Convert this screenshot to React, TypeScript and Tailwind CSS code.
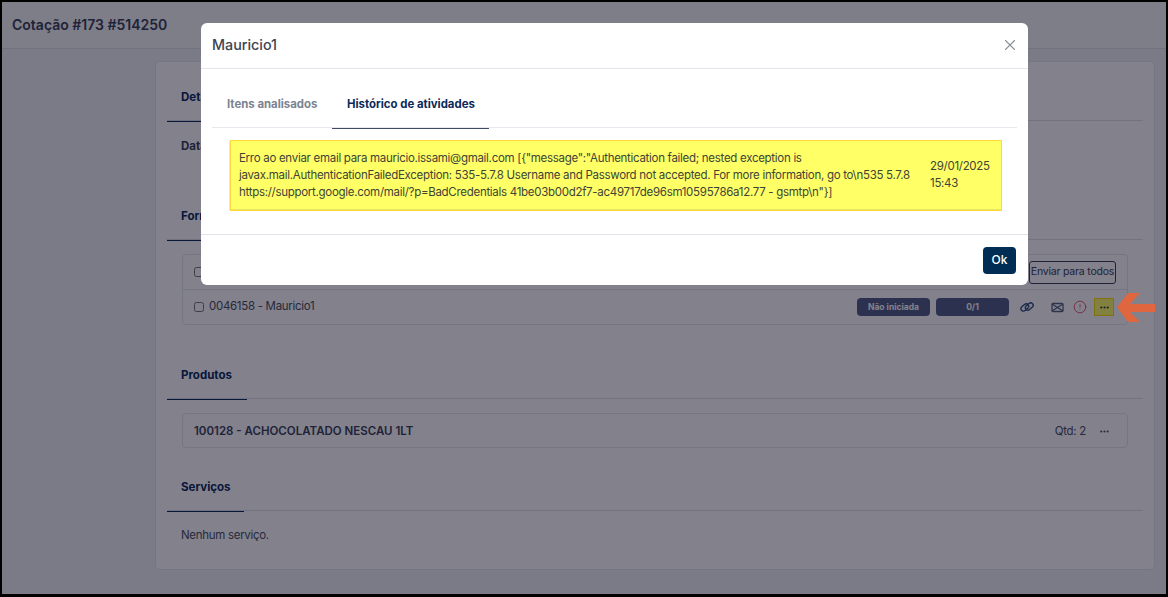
import { AlertCircle, Ellipsis, X } from 'lucide-react';

function SectionTab({ label, width }: { label: string; width: string }) {
  return (
    <div className="flex h-[47px] border-b-[1.5px] border-[#dfe3e8]">
      <div className={`${width} -mb-[1.5px] border-b-[1.5px] border-[#0a2a5a] pl-[14px] pt-[14px] text-[11.5px] leading-[18px] font-bold text-[#0a2a5a]`}>
        {label}
      </div>
    </div>
  );
}

function LinkIcon() {
  return (
    <svg className="ml-[11px] text-[#33507f]" width="14" height="14" viewBox="0 0 14 14" fill="none" stroke="currentColor" strokeWidth="1.4">
      <rect x="0.5" y="5" width="8.5" height="5" rx="2.5" transform="rotate(-40 4.75 7.5)" />
      <rect x="5" y="4" width="8.5" height="5" rx="2.5" transform="rotate(-40 9.25 6.5)" />
    </svg>
  );
}

function MailIcon() {
  return (
    <svg className="ml-[17px] text-[#55657c]" width="13" height="13" viewBox="0 0 13 13" fill="none" stroke="currentColor" strokeWidth="1.3">
      <rect x="1" y="2.5" width="11" height="8" rx="1" />
      <path d="M1 3l5.5 3.5L12 3M1 10l5.5-3.5L12 10" />
    </svg>
  );
}

function Modal() {
  return (
    <div className="absolute left-[199px] top-[21px] w-[827px] h-[262px] rounded-[6px] bg-white flex flex-col">
      {/* Header */}
      <div className="h-[46px] flex items-center justify-between pl-[11px] pr-[9px] pb-[2px] border-b border-[#e3e6ea] shrink-0">
        <span className="text-[14.3px] font-medium text-[#3d4450]">Mauricio1</span>
        <X className="w-[18px] h-[18px] text-[#8a8f98]" strokeWidth={1.5} />
      </div>

      {/* Tabs */}
      <div className="mx-[11px] flex h-[59px] border-b-[1.5px] border-[#e6e9ed] shrink-0">
        <div className="w-[120px] pl-[15px] pt-[26px] text-[11.4px] leading-[18px] font-bold text-[#7b8491]">Itens analisados</div>
        <div className="w-[157px] -mb-[1.5px] border-b-[1.5px] border-[#3f4c63] pl-[15px] pt-[26px] text-[11.4px] leading-[18px] font-bold text-[#0a2a5a]">
          Histórico de atividades
        </div>
      </div>

      {/* Highlighted log entry */}
      <div className="mt-[12px] ml-[29px] w-[772px] h-[71px] border-[1.5px] border-[#ffd83d] bg-[#ffff66] shadow-[-2px_0_0_-1px_#e4e6ea] shrink-0">
        <div className="h-full border-b border-[#e8e85c] flex items-center pl-[8px] text-[11.5px] leading-[17px] tracking-[-0.29px] text-[#3e4436]">
          <div className="w-[691px] shrink-0 whitespace-nowrap">
            Erro ao enviar email para mauricio.issami@gmail.com [&#123;"message":"Authentication failed; nested exception is
            <br />
            javax.mail.AuthenticationFailedException: 535-5.7.8 Username and Password not accepted. For more information, go to\n535 5.7.8
            <br />
            https://support.google.com/mail/?p=BadCredentials 41be03b00d2f7-ac49717de96sm10595786a12.77 - gsmtp\n"&#125;]
          </div>
          <div>
            29/01/2025
            <br />
            15:43
          </div>
        </div>
      </div>

      {/* Footer */}
      <div className="mt-[23px] flex-1 border-t border-[#e0e3e8] flex items-center justify-end pr-[12px]">
        <button className="w-[33px] h-[27px] rounded-[4px] bg-[#002d53] text-white text-[12px] font-medium">Ok</button>
      </div>
    </div>
  );
}

export default function App() {
  return (
    <div className="relative w-[1168px] h-[597px] overflow-hidden border-t-2 border-l-2 border-r-2 border-b-[3px] border-black bg-[#eff3f5] font-['Inter',sans-serif]">
      {/* Page header */}
      <div className="h-[47px] border-b border-[#dfe2e8] bg-[#f7f8f9] pl-[10px] pb-[2px] flex items-center text-[14px] font-semibold text-[#3b4256]">
        Cotação #173 #514250
      </div>

      {/* Card */}
      <div className="ml-[153px] mt-[12px] w-[1000px] h-[509px] rounded-[5px] border border-[#e2e5ea] bg-white px-[11px] pt-[12px]">
        <SectionTab label="Detalhes" width="w-[80px]" />
        <div className="pl-[14px] pt-[16px] h-[72px] text-[11.5px] leading-[18px] font-bold text-[#3b4256]">Data</div>

        <SectionTab label="Fornecedores" width="w-[80px]" />

        <div className="mx-[15px] mt-[14px] w-[946px] rounded-[4px] border border-[#e5e8ec] text-[#4a505c]">
          <div className="h-[35px] flex items-center justify-between pl-[11px] pr-[11px] border-b border-[#e5e8ec]">
            <input type="checkbox" className="w-[10px] h-[10px]" readOnly />
            <button className="w-[87px] h-[23px] rounded-[3px] border border-[#3b4256] text-[10.5px] tracking-[-0.2px] whitespace-nowrap text-[#3b4256] bg-white">Enviar para todos</button>
          </div>
          <div className="h-[34px] flex items-center pl-[11px] pr-[13px] text-[11.5px] tracking-[-0.3px]">
            <input type="checkbox" className="w-[10px] h-[10px] mr-[5px]" readOnly />
            <span>0046158 - Mauricio1</span>
            <div className="ml-auto flex items-center tracking-normal">
              <span className="w-[73px] h-[18px] rounded-[4px] bg-[#535f87] text-white text-[8.5px] font-bold flex items-center justify-center">Não iniciada</span>
              <span className="ml-[6px] w-[73px] h-[18px] rounded-[4px] bg-[#535f87] text-white text-[8.5px] font-bold flex items-center justify-center">0/1</span>
              <LinkIcon />
              <MailIcon />
              <AlertCircle className="ml-[9px] w-[14px] h-[14px] text-[#e0596a]" strokeWidth={1.6} />
              <span className="ml-[7px] w-[20px] h-[18px] border border-[#ffe000] bg-[#ffff66] flex items-center justify-center">
                <Ellipsis className="w-[11px] h-[11px] text-[#2a2f3a]" strokeWidth={2.5} />
              </span>
            </div>
          </div>
        </div>

        <div className="mt-[27px]">
          <SectionTab label="Produtos" width="w-[80px]" />
        </div>
        <div className="mx-[15px] mt-[14px] w-[946px] h-[35px] rounded-[4px] border border-[#e5e8ec] flex items-center pl-[11px] pr-[17px] pt-[2px] text-[11.5px] text-[#3b4256]">
          <span className="font-semibold">100128 - ACHOCOLATADO NESCAU 1LT</span>
          <span className="ml-auto tracking-[-0.3px] text-[#4a505c]">Qtd: 2</span>
          <Ellipsis className="ml-[13px] w-[11px] h-[11px] text-[#4a505c]" strokeWidth={2.5} />
        </div>

        <div className="mt-[16px]">
          <SectionTab label="Serviços" width="w-[77px]" />
        </div>
        <div className="pl-[14px] pt-[15px] text-[11.5px] leading-[18px] tracking-[-0.3px] text-[#4a505c]">Nenhum serviço.</div>
      </div>

      {/* Backdrop */}
      <div className="absolute inset-0 bg-[#050319]/50" />

      <Modal />

      {/* Annotation arrow */}
      <svg className="absolute left-[1113px] top-[288px]" width="40" height="34" viewBox="0 0 40 34">
        <path d="M2 17 L13 3 L25 3 L15 14 L40 14 L40 22 L15 22 L25 32 L13 32 Z" fill="#e0663f" />
      </svg>
    </div>
  );
}
